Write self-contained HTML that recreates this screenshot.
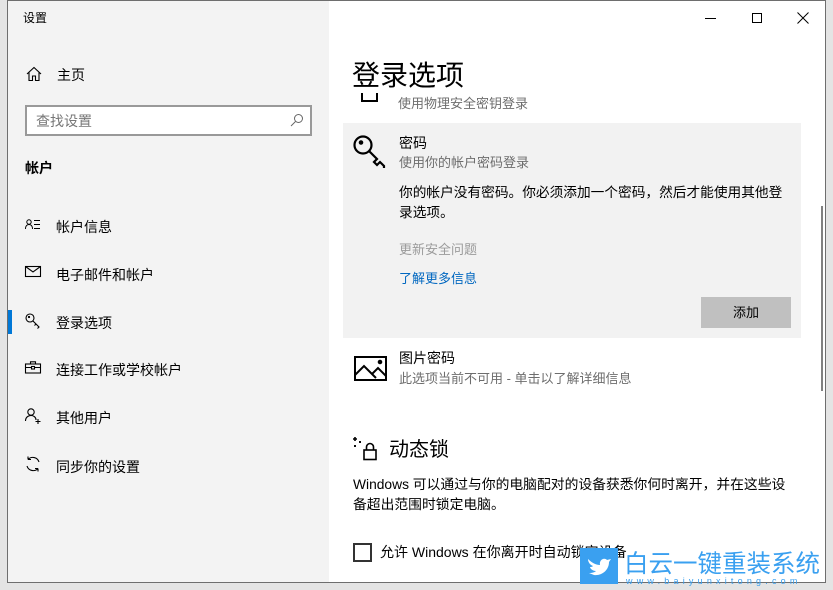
<!DOCTYPE html>
<html><head><meta charset="utf-8"><style>
*{margin:0;padding:0;box-sizing:border-box}
body{width:833px;height:590px;overflow:hidden;background:#e4e4e4;font-family:"Liberation Sans","Noto Sans CJK SC",sans-serif;position:relative;color:#000}
.win{position:absolute;left:7px;top:0;width:819px;height:583px;border:1px solid #6e6e6e;background:#fff;overflow:hidden}
.side{position:absolute;left:0;top:0;width:321px;height:100%;background:#f3f3f3}
.a{position:absolute;white-space:nowrap}
.t{font-size:14px}
.s{font-size:13px;color:#6d6d6d}
svg{position:absolute;overflow:visible}
</style></head><body>
<div class="win">
<div class="side">
<div class="a" style="left:15px;top:8px;font-size:12px">设置</div>
<svg style="left:18px;top:65px" width="16" height="16" viewBox="0 0 16 16" fill="none" stroke="#000" stroke-width="1.1"><path d="M1 8L8 1.5 15 8M3 6.5V14.5H6.5V10H9.5V14.5H13V6.5"/></svg>
<div class="a t" style="left:49px;top:64px">主页</div>
<div class="a" style="left:17px;top:104px;width:287px;height:31px;border:2px solid #999;background:#fff"></div>
<div class="a t" style="left:28px;top:110px;color:#767676">查找设置</div>
<svg style="left:282px;top:112px" width="14" height="14" viewBox="0 0 14 14" fill="none" stroke="#666" stroke-width="1"><circle cx="8.5" cy="5.5" r="4"/><path d="M5.5 8.5L1 13"/></svg>
<div class="a t" style="left:17px;top:157px;font-weight:bold">帐户</div>
<svg style="left:17px;top:218px" width="16" height="12" viewBox="0 0 16 12" fill="none" stroke="#000" stroke-width="1"><circle cx="4" cy="3" r="2.2"/><path d="M0.5 10C0.5 7 2 5.5 4 5.5S7.5 7 7.5 10M9 1.5H15M9 5.5H15M9 9.5H15"/></svg>
<div class="a t" style="left:48px;top:216px">帐户信息</div>
<svg style="left:17px;top:265px" width="16" height="12" viewBox="0 0 16 12" fill="none" stroke="#000" stroke-width="1.1"><rect x="0.5" y="0.5" width="15" height="10"/><path d="M0.5 0.5L8 6 15.5 0.5"/></svg>
<div class="a t" style="left:48px;top:264px">电子邮件和帐户</div>
<div class="a" style="left:0;top:309px;width:4px;height:24px;background:#0078d7"></div>
<svg style="left:17px;top:312px" width="17" height="17" viewBox="0 0 17 17" fill="none" stroke="#000" stroke-width="1.1"><circle cx="5" cy="5" r="4"/><circle cx="4" cy="4" r="0.6" fill="#000"/><path d="M8 8L14 14 12.5 15.5M11 11L9.5 12.5"/></svg>
<div class="a t" style="left:48px;top:312px">登录选项</div>
<svg style="left:17px;top:360px" width="16" height="13" viewBox="0 0 16 13" fill="none" stroke="#000" stroke-width="1.1"><rect x="0.5" y="3" width="15" height="9"/><path d="M5.5 3V0.8H10.5V3M0.5 6.5H15.5"/><rect x="6.5" y="5.5" width="3" height="2.5" fill="#fff"/></svg>
<div class="a t" style="left:48px;top:359px">连接工作或学校帐户</div>
<svg style="left:17px;top:407px" width="16" height="16" viewBox="0 0 16 16" fill="none" stroke="#000" stroke-width="1.1"><circle cx="6" cy="4" r="3.2"/><path d="M0.5 13C0.5 9.5 3 7.5 6 7.5S11 9.5 11 12M13 11V16M10.5 13.5H15.5"/></svg>
<div class="a t" style="left:48px;top:407px">其他用户</div>
<svg style="left:17px;top:455px" width="16" height="16" viewBox="0 0 16 16" fill="none" stroke="#000" stroke-width="1.1"><path d="M14 6A6.5 6.5 0 0 0 3 3.5M2 10A6.5 6.5 0 0 0 13 12.5M3 3.5V0.5M3 3.5H6M13 12.5V15.5M13 12.5H10"/></svg>
<div class="a t" style="left:48px;top:456px">同步你的设置</div>
</div>
<!-- content -->
<div class="a" style="left:697px;top:17px;width:11px;height:1px;background:#000"></div>
<div class="a" style="left:744px;top:12px;width:10px;height:10px;border:1px solid #000"></div>
<svg style="left:789px;top:11px" width="12" height="12" viewBox="0 0 12 12" stroke="#000" stroke-width="1"><path d="M0.5 0.5L11.5 11.5M11.5 0.5L0.5 11.5"/></svg>
<div class="a" style="left:344px;top:53px;font-size:28px">登录选项</div>
<div class="a" style="left:343px;top:92px;width:430px;height:22px;overflow:hidden">
<div class="a" style="left:10px;top:-8px;width:17px;height:17px;border:2px solid #000;border-top:none"></div>
<div class="a s" style="left:47px;top:0px">使用物理安全密钥登录</div></div>
<div class="a" style="left:335px;top:122px;width:458px;height:215px;background:#f2f2f2"></div>
<svg style="left:345px;top:134px" width="34" height="33" viewBox="0 0 34 33" fill="none" stroke="#000" stroke-width="2.2"><circle cx="10" cy="10" r="8.5"/><circle cx="8" cy="7.5" r="1.2" fill="#000"/><path d="M16 16L24 24 21 27 24 30 27 27 31 31V33"/></svg>
<div class="a t" style="left:391px;top:132px">密码</div>
<div class="a s" style="left:391px;top:151px">使用你的帐户密码登录</div>
<div class="a" style="left:391px;top:182px;font-size:13.7px;line-height:20px">你的帐户没有密码。你必须添加一个密码，然后才能使用其他登<br>录选项。</div>
<div class="a" style="left:391px;top:238px;font-size:13px;color:#9b9b9b">更新安全问题</div>
<div class="a" style="left:391px;top:267px;font-size:13px;color:#0067c0">了解更多信息</div>
<div class="a" style="left:693px;top:296px;width:90px;height:31px;background:#c0c0c0;font-size:13px;text-align:center;line-height:31px">添加</div>
<svg style="left:346px;top:355px" width="33" height="25" viewBox="0 0 33 25" fill="none" stroke="#000" stroke-width="2"><rect x="1" y="1" width="31" height="23"/><path d="M1 19L10 10 22 22M18 18L24 12 32 20"/><circle cx="26" cy="6" r="1.3" fill="#000"/></svg>
<div class="a t" style="left:391px;top:347px">图片密码</div>
<div class="a s" style="left:391px;top:367px">此选项当前不可用 - 单击以了解详细信息</div>
<svg style="left:344px;top:434px" width="26" height="26" viewBox="0 0 26 26" fill="none" stroke="#000" stroke-width="1.6"><path d="M3 2V6M1 4H5M8 6V8M7 7H9M3 10V12M2 11H4"/><rect x="12" y="15" width="12" height="9.5"/><path d="M14.5 15V12A3.5 3.5 0 0 1 21.5 12V15"/></svg>
<div class="a" style="left:381px;top:432px;font-size:20px">动态锁</div>
<div class="a" style="left:345px;top:474px;font-size:13.8px;line-height:20px">Windows 可以通过与你的电脑配对的设备获悉你何时离开，并在这些设<br>备超出范围时锁定电脑。</div>
<div class="a" style="left:345px;top:542px;width:19px;height:19px;border:2px solid #333"></div>
<div class="a" style="left:372px;top:541px;font-size:14px">允许 Windows 在你离开时自动锁定设备</div>
<div class="a" style="left:813px;top:205px;width:2px;height:185px;background:#808080"></div>
</div>
<!-- watermark -->
<div class="a" style="left:580px;top:548px;width:38px;height:36px;background:#3aa0f0"></div>
<svg style="left:586px;top:555px" width="26" height="22" viewBox="0 0 26 22"><path d="M2 4C6 8 10 10 14 10C13 5 18 2 21 5L25 4L23 7C23 15 16 21 8 20L3 18C7 18 9 17 10 16C6 16 4 13 4 12C5 12 6 12 7 11C4 10 2 7 2 4Z" fill="#fff"/></svg>
<div class="a" style="left:624px;top:545px;font-size:24.5px;color:#3aa0f0;letter-spacing:0px">白云一键重装系统</div>
<div class="a" style="left:626px;top:577px;font-size:9px;line-height:9px;color:#3aa0f0;letter-spacing:4.2px">www.baiyunxitong.com</div>
</body></html>
